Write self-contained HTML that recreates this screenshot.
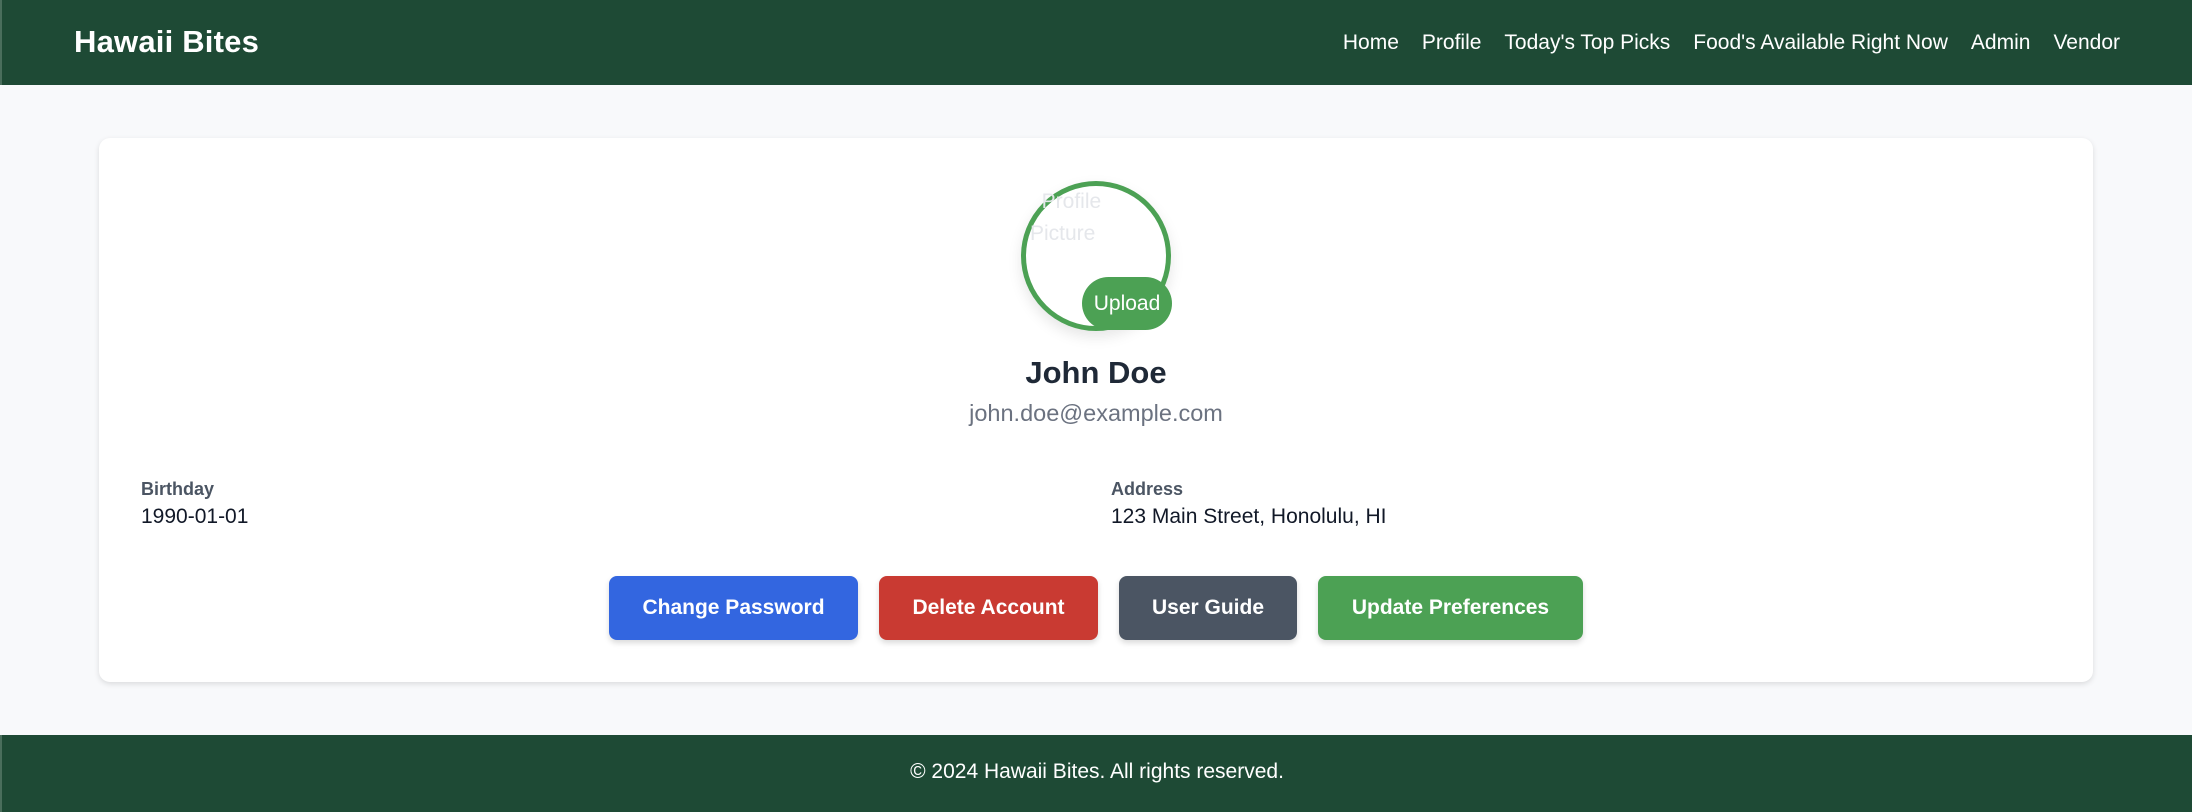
<!DOCTYPE html>
<html><head><meta charset="utf-8"><style>
*{margin:0;padding:0;box-sizing:border-box}
body{width:2192px;height:812px;background:#f8f9fb;font-family:"Liberation Sans",Arial,sans-serif;position:relative;overflow:hidden}
.nav{position:absolute;left:0;top:0;width:2192px;height:85px;background:#1e4a35;border-left:2px solid #4a6e5c}
.brand{position:absolute;left:72px;top:24px;color:#fff;font-weight:bold;font-size:31px;letter-spacing:.2px}
.links{position:absolute;right:72px;top:31px;color:#fff;font-size:21px;display:flex;gap:23px}
.card{position:absolute;left:99px;top:138px;width:1994px;height:544px;background:#fff;border-radius:11px;box-shadow:0 2px 6px rgba(0,0,0,.12)}
.circle{position:absolute;left:1021px;top:181px;width:150px;height:150px;border:5.5px solid #4ca154;border-radius:50%;box-shadow:0 6px 14px rgba(0,0,0,.1)}
.alt{position:absolute;left:1030px;top:186px;color:#e5e7eb;font-size:21px;line-height:32px;width:80px;overflow:hidden;white-space:nowrap}
.up{position:absolute;left:1082px;top:277px;width:90px;height:53px;border-radius:27px;background:#4ca154;color:#fff;font-size:21px;text-align:center;line-height:53px}
.name{position:absolute;left:0;width:2192px;top:355px;text-align:center;font-weight:bold;font-size:31px;color:#1f2937}
.email{position:absolute;left:0;width:2192px;top:400px;text-align:center;font-size:23.5px;color:#6b7280}
.lbl{position:absolute;top:479px;font-weight:bold;font-size:18px;color:#4b5563}
.val{position:absolute;top:505px;font-size:21px;color:#111827}
.btn{position:absolute;top:576px;height:64px;border-radius:8px;color:#fff;font-weight:bold;font-size:21px;text-align:center;line-height:64px;box-shadow:0 3px 6px rgba(0,0,0,.15)}
.foot{position:absolute;left:0;top:735px;width:2192px;height:77px;background:#1e4a35;color:#fff;font-size:21px;text-align:center;line-height:74px;border-left:2px solid #4a6e5c}
</style></head><body>
<div class="nav"><div class="brand">Hawaii Bites</div>
<div class="links"><span>Home</span><span>Profile</span><span>Today's Top Picks</span><span>Food's Available Right Now</span><span>Admin</span><span>Vendor</span></div></div>
<div class="card"></div>
<div class="circle"></div>
<div class="alt">&nbsp;&nbsp;Profile<br>Picture</div>
<div class="up">Upload</div>
<div class="name">John Doe</div>
<div class="email">john.doe@example.com</div>
<div class="lbl" style="left:141px">Birthday</div>
<div class="val" style="left:141px">1990-01-01</div>
<div class="lbl" style="left:1111px">Address</div>
<div class="val" style="left:1111px">123 Main Street, Honolulu, HI</div>
<div class="btn" style="left:609px;width:249px;background:#3366e0">Change Password</div>
<div class="btn" style="left:879px;width:219px;background:#c93a32">Delete Account</div>
<div class="btn" style="left:1119px;width:178px;background:#4b5563">User Guide</div>
<div class="btn" style="left:1318px;width:265px;background:#4ca154">Update Preferences</div>
<div class="foot">© 2024 Hawaii Bites. All rights reserved.</div>
</body></html>
